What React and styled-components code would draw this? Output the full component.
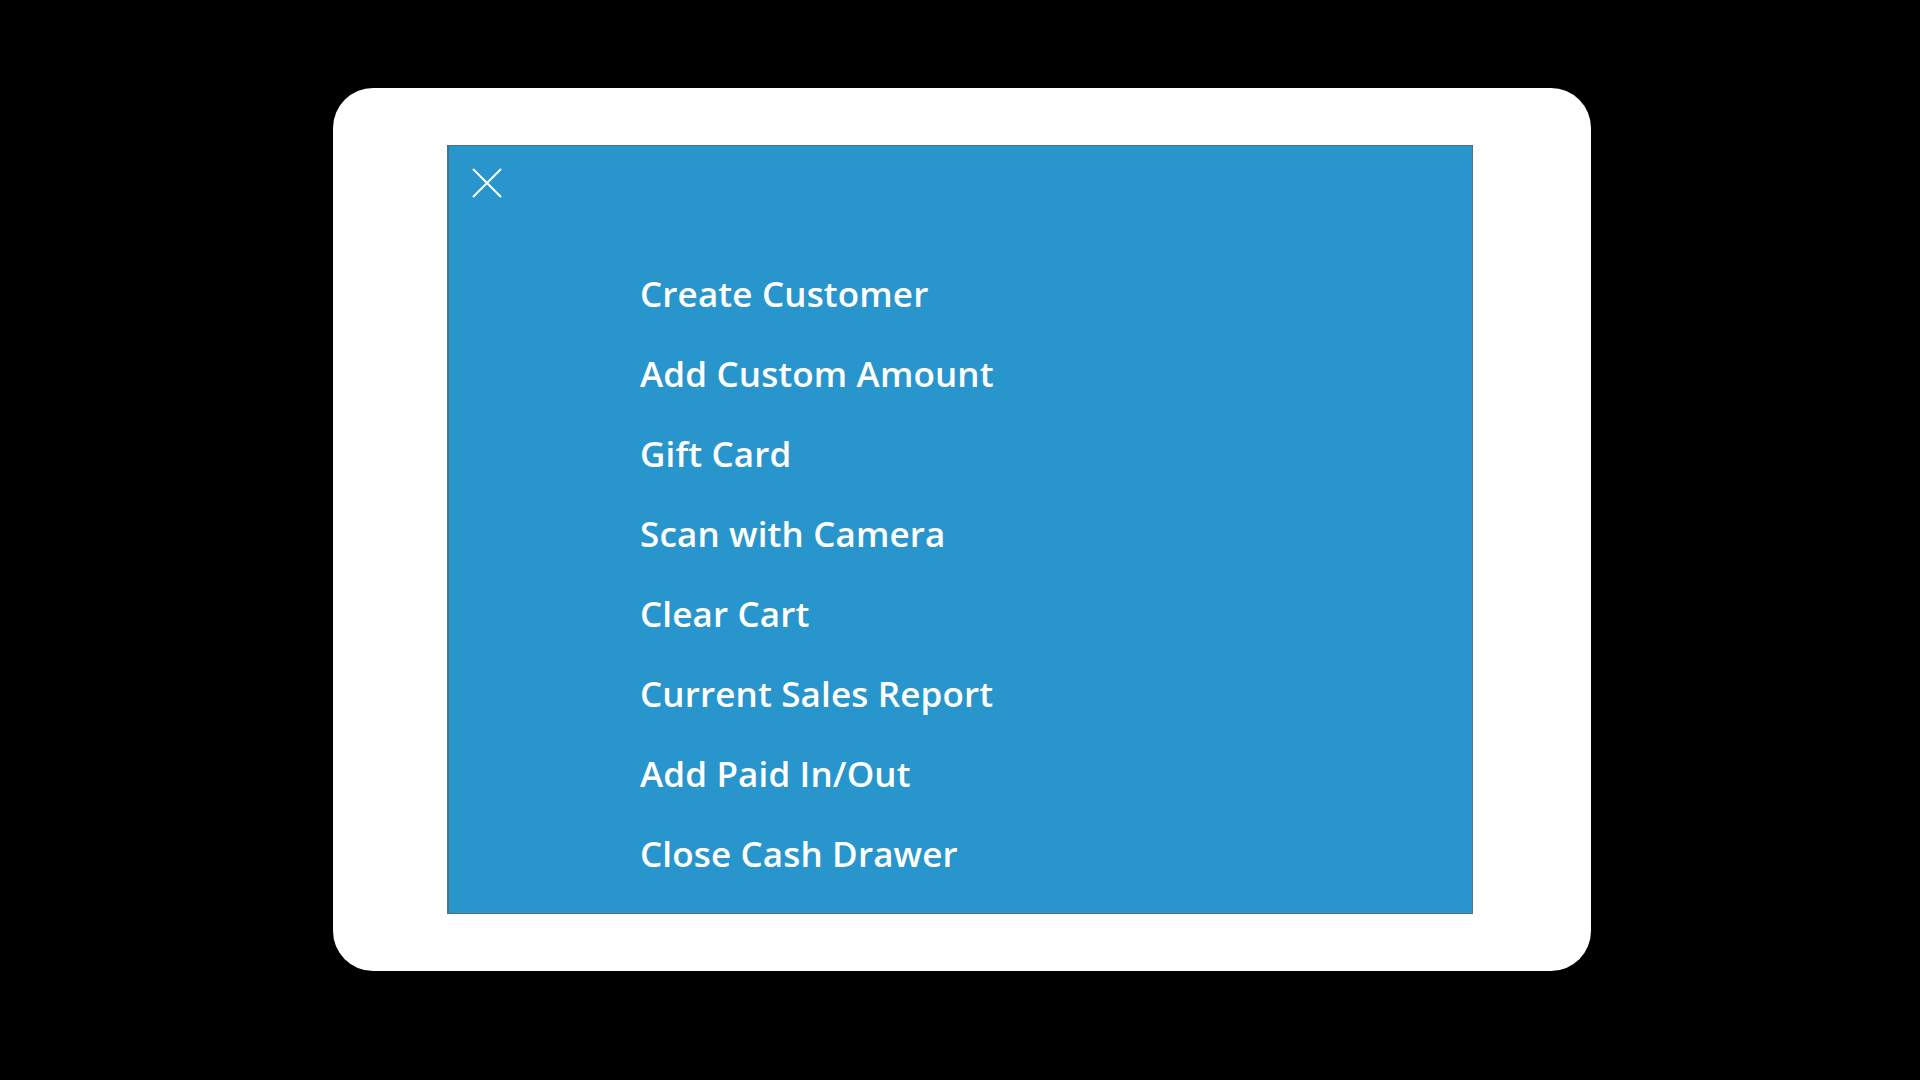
import styled, { createGlobalStyle } from 'styled-components';

const GlobalStyle = createGlobalStyle`
  html, body {
    margin: 0;
    padding: 0;
    background: #000;
  }
  body {
    font-family: "Open Sans", "Liberation Sans", sans-serif;
  }
`;

const Screen = styled.div`
  width: 1920px;
  height: 1080px;
  display: flex;
  justify-content: center;
  align-items: flex-start;
  padding-top: 88px;
  box-sizing: border-box;
  background: #000;
`;

const Device = styled.div`
  width: 1258px;
  height: 883px;
  margin-left: 4px;
  box-sizing: border-box;
  background: #fff;
  border-radius: 40px;
  padding: 57px 118px 57px 114px;
  display: flex;
`;

const Menu = styled.div`
  flex: 1;
  background: #2896cd;
  border: 1px solid #4f6f84;
  border-left-width: 2px;
  display: flex;
  flex-direction: column;
  padding: 22px 0 0 23px;
`;

const CloseButton = styled.button`
  width: 30px;
  height: 30px;
  padding: 0;
  border: none;
  background: none;
  display: flex;
  cursor: pointer;
`;

const Items = styled.ul`
  list-style: none;
  margin: 56px 0 0 168px;
  padding: 0;
`;

const Item = styled.li`
  height: 80px;
  line-height: 80px;
  font-size: 35px;
  font-weight: 600;
  color: #fff;
  letter-spacing: 0.15px;
`;

const items = [
  'Create Customer',
  'Add Custom Amount',
  'Gift Card',
  'Scan with Camera',
  'Clear Cart',
  'Current Sales Report',
  'Add Paid In/Out',
  'Close Cash Drawer',
];

export default function App() {
  return (
    <>
      <GlobalStyle />
      <Screen>
        <Device>
          <Menu>
            <CloseButton aria-label="Close">
              <svg width="30" height="30" viewBox="0 0 30 30">
                <path d="M1 1 L29 29 M29 1 L1 29" stroke="#fff" strokeWidth="2" fill="none" />
              </svg>
            </CloseButton>
            <Items>
              {items.map((label) => (
                <Item key={label}>{label}</Item>
              ))}
            </Items>
          </Menu>
        </Device>
      </Screen>
    </>
  );
}
